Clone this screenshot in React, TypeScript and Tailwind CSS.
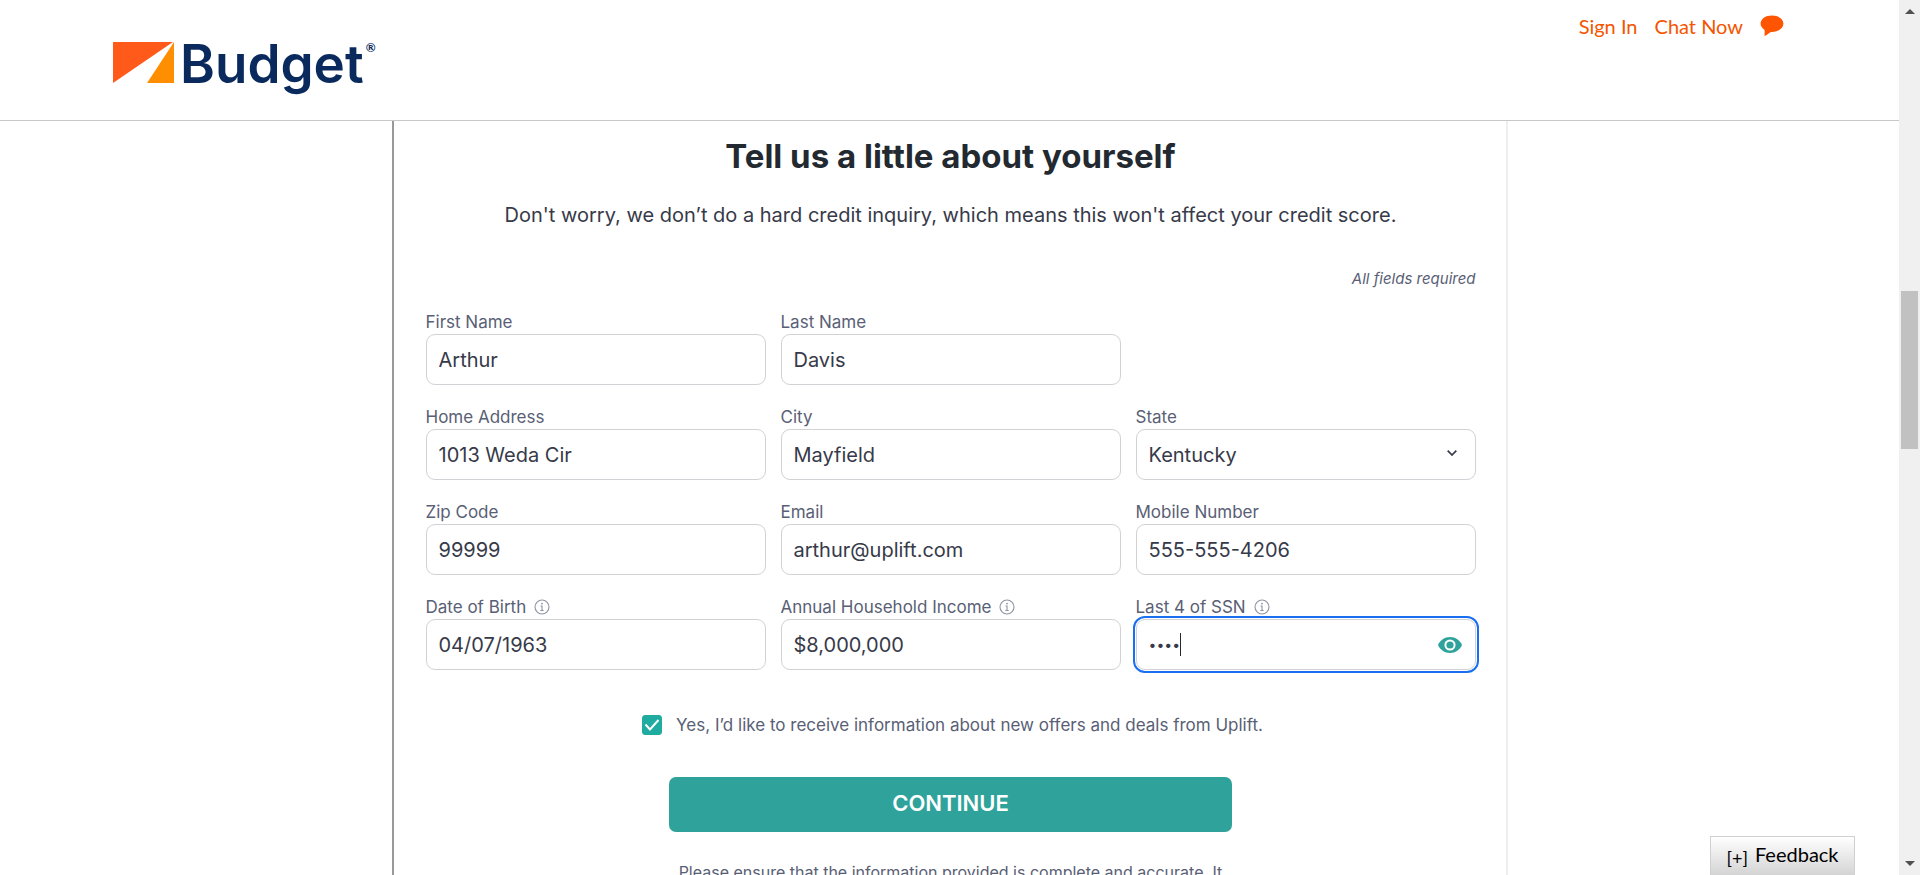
import { useState, type ReactNode } from "react";

const boxClass =
  "block h-[51px] w-full rounded-[9px] border border-[#d2d2d6] bg-white px-3 leading-6 text-[#373a49] outline-none";

function InfoIcon() {
  return (
    <svg viewBox="0 0 16 16" className="size-4 text-[#8d92a3]" fill="none" stroke="currentColor" aria-hidden="true">
      <circle cx="8" cy="8" r="7" strokeWidth="1.1" />
      <path d="M6.5 7H8v4.5M6.3 11.5h3.4" strokeWidth="1.1" />
      <circle cx="8" cy="4.6" r="0.9" fill="currentColor" stroke="none" />
    </svg>
  );
}

function Field({ id, label, info, children }: { id: string; label: string; info?: boolean; children: ReactNode }) {
  return (
    <div>
      <div className="flex h-[25px] items-center gap-2">
        <label htmlFor={id} className="text-[17px] leading-6 text-[#596075]">
          {label}
        </label>
        {info && <InfoIcon />}
      </div>
      {children}
    </div>
  );
}

function TextField({ id, label, value, info }: { id: string; label: string; value: string; info?: boolean }) {
  return (
    <Field id={id} label={label} info={info}>
      <input id={id} type="text" defaultValue={value} className={`${boxClass} text-xl`} />
    </Field>
  );
}

function Logo() {
  return (
    <a href="#home" aria-label="Budget" className="flex items-start text-[#0a2a5e]">
      <svg viewBox="0 0 61 41" className="mt-[42px] h-[41px] w-[61px]" aria-hidden="true">
        <path d="M0 0H60L0 41Z" fill="#ff5a1a" />
        <path d="M61 0V41H34Z" fill="#ff8f00" />
      </svg>
      <span className="mt-[27px] ml-[6px] text-[53px] leading-[74px] font-semibold">Budget</span>
      <span className="mt-[38px] ml-[2px] font-[Lato] text-xs leading-5 font-bold">®</span>
    </a>
  );
}

function Header() {
  return (
    <header className="flex h-[121px] shrink-0 items-start justify-between border-b border-[#c8c8c8] bg-white pr-[115px] pl-[113px]">
      <Logo />
      <nav className="flex items-center gap-[17px] pt-3 font-[Lato] text-xl leading-7 text-[#f45500]">
        <a href="#signin">Sign In</a>
        <a href="#chat">Chat Now</a>
        <a href="#chat" aria-label="Open chat">
          <svg viewBox="0 0 24 22" className="h-[22px] w-6" fill="#ff5500" aria-hidden="true">
            <path d="M12 0.500C5.500.500.600 4 .600 8.600c0 2.600 1.500 4.900 4 6.300V21.300c2-1.600 4-2.900 6.200-4.400 6.900.400 12.600-3.200 12.600-8.300C23.400 4 18.300.500 12 .500Z" />
          </svg>
        </a>
      </nav>
    </header>
  );
}

function Scrollbar() {
  return (
    <div className="flex w-[21px] shrink-0 flex-col items-center bg-[#f0f0f0]" aria-hidden="true">
      <svg viewBox="0 0 10 5" className="mt-[9px] h-[5px] w-[10px]" fill="#505050">
        <path d="M5 0L10 5H0Z" />
      </svg>
      <div className="grow-[277]" />
      <div className="w-[17px] grow-[158] bg-[#c1c1c1]" />
      <div className="grow-[412]" />
      <svg viewBox="0 0 10 5" className="mb-[9px] h-[5px] w-[10px]" fill="#505050">
        <path d="M0 0H10L5 5Z" />
      </svg>
    </div>
  );
}

export default function App() {
  const [agreed, setAgreed] = useState(true);
  const [showSsn, setShowSsn] = useState(false);
  return (
    <div className="flex h-screen overflow-hidden bg-white font-[Inter,sans-serif]">
      <div className="flex min-w-0 grow flex-col">
        <Header />
        <main className="flex min-h-0 grow justify-center overflow-hidden">
          <form className="h-max w-full max-w-[1116px] border-x-2 border-r-[#eeeeee] border-l-[#999999] pt-[15px] pr-[30px] pb-10 pl-8">
            <h1 className="text-center text-[33px] leading-10 font-bold text-[#232930]">Tell us a little about yourself</h1>
            <p className="mt-[25px] text-center text-xl leading-7 text-[#373a49]">
              Don't worry, we don’t do a hard credit inquiry, which means this won't affect your credit score.
            </p>
            <p className="mt-[38px] text-right text-[15px] leading-6 text-[#596075] italic">All fields required</p>

            <div className="mt-[18px] grid grid-cols-3 gap-x-[15px] gap-y-[19px]">
              <TextField id="first" label="First Name" value="Arthur" />
              <TextField id="last" label="Last Name" value="Davis" />
              <div />
              <TextField id="address" label="Home Address" value="1013 Weda Cir" />
              <TextField id="city" label="City" value="Mayfield" />
              <Field id="state" label="State">
                <div className="relative">
                  <select id="state" defaultValue="Kentucky" className={`${boxClass} appearance-none text-xl`}>
                    <option>Kentucky</option>
                  </select>
                  <svg viewBox="0 0 10 6" className="pointer-events-none absolute top-[21px] right-[19px] h-[6px] w-[10px]" fill="none" stroke="#373a49" strokeWidth="1.7" aria-hidden="true">
                    <path d="M0.700 0.700L5 5L9.300 0.700" />
                  </svg>
                </div>
              </Field>
              <TextField id="zip" label="Zip Code" value="99999" />
              <TextField id="email" label="Email" value="arthur@uplift.com" />
              <TextField id="mobile" label="Mobile Number" value="555-555-4206" />
              <TextField id="dob" label="Date of Birth" value="04/07/1963" info />
              <TextField id="income" label="Annual Household Income" value="$8,000,000" info />
              <Field id="ssn" label="Last 4 of SSN" info>
                <div className="relative rounded-[9px] outline-2 outline-offset-1 outline-[#1a6ff0]">
                  <input id="ssn" type={showSsn ? "text" : "password"} defaultValue="4821" className={`${boxClass} text-sm`} />
                  <span className="absolute top-[14px] left-11 h-[23px] w-px bg-[#232930]" aria-hidden="true" />
                  <button type="button" aria-label="Show SSN" onClick={() => setShowSsn(!showSsn)} className="absolute top-[18px] right-[14px]">
                    <svg viewBox="0 0 24 16" className="h-4 w-6" aria-hidden="true">
                      <path d="M12 0C6.500 0 2 3.300 0 8c2 4.700 6.500 8 12 8s10-3.300 12-8C22 3.300 17.500 0 12 0Z" fill="#2fa39b" />
                      <circle cx="12" cy="8" r="4.600" fill="none" stroke="#fff" strokeWidth="2" />
                    </svg>
                  </button>
                </div>
              </Field>
            </div>

            <div className="mt-[43px] flex items-center justify-center gap-[14px] pl-1">
              <span className="relative size-5">
                <input
                  id="offers"
                  type="checkbox"
                  checked={agreed}
                  onChange={(e) => setAgreed(e.target.checked)}
                  className="block size-5 appearance-none rounded-[3px] border border-[#1fab9f] checked:bg-[#1fab9f]"
                />
                {agreed && (
                  <svg viewBox="0 0 20 20" className="pointer-events-none absolute inset-0 size-5" fill="none" stroke="#fff" strokeWidth="2" aria-hidden="true">
                    <path d="M3.500 9.500L8 14.500L16.500 5" />
                  </svg>
                )}
              </span>
              <label htmlFor="offers" className="text-[17px] leading-6 text-[#596075]">
                Yes, I’d like to receive information about new offers and deals from Uplift.
              </label>
            </div>

            <button type="submit" className="mx-auto mt-10 block h-[55px] w-full max-w-[563px] rounded-[7px] bg-[#2fa39b] pb-[2px] text-[22px] font-semibold text-white">
              CONTINUE
            </button>
            <p className="mx-auto mt-7 max-w-[563px] text-center text-base leading-6 text-[#596075]">
              Please ensure that the information provided is complete and accurate. It
            </p>
          </form>
        </main>
      </div>
      <Scrollbar />
      <button
        type="button"
        className="fixed right-[65px] bottom-0 flex h-[39px] w-[145px] items-center justify-center gap-[7px] border border-b-0 border-[#d0d0d0] bg-linear-to-b from-white to-[#d4d4d4] pb-[5px] font-[Lato] text-xl text-black"
      >
        <span className="pt-2 text-lg leading-6">[+]</span>
        <span className="leading-6">Feedback</span>
      </button>
    </div>
  );
}
